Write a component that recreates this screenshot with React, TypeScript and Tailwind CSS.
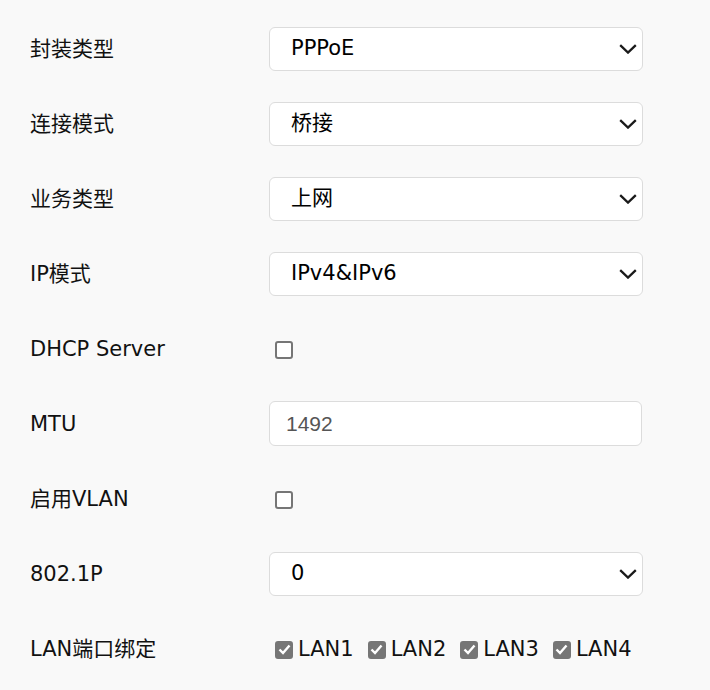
import React, { useState } from 'react';

const font = { fontFamily: '"DejaVu Sans", "Noto Sans CJK SC", sans-serif' };

const Chevron = () => (
  <svg width="18" height="10" viewBox="0 0 18 10" className="pointer-events-none absolute right-[6px] top-1/2 -translate-y-1/2">
    <path d="M1.2 1.2 L9 8.6 L16.8 1.2" fill="none" stroke="#1a1a1a" strokeWidth="2.3" />
  </svg>
);

const Select = ({ value, options }: { value: string; options: string[] }) => (
  <div className="relative w-[374px]">
    <select
      defaultValue={value}
      className="h-[44px] w-full appearance-none rounded-[6px] border border-[#dcdcdc] bg-white pl-[21px] pr-10 pt-[1px] text-[21px] text-black outline-none"
      style={font}
    >
      {options.map((o) => (
        <option key={o}>{o}</option>
      ))}
    </select>
    <Chevron />
  </div>
);

const Box = ({ checked, onClick }: { checked: boolean; onClick?: () => void }) => (
  <span
    onClick={onClick}
    className={`flex h-[18px] w-[18px] shrink-0 items-center justify-center rounded-[3px] border-2 border-[#767676] ${checked ? 'bg-[#767676]' : 'bg-white'}`}
  >
    {checked && (
      <svg width="13" height="11" viewBox="0 0 13 11">
        <path d="M1.5 5.5 L5 9 L11.5 1.5" fill="none" stroke="#fff" strokeWidth="2.4" />
      </svg>
    )}
  </span>
);

const Row = ({ label, children }: { label: string; children: React.ReactNode }) => (
  <div className="flex h-[75px] items-center">
    <div className="w-[239px] pt-[3px] text-[21px] text-[#111]">{label}</div>
    {children}
  </div>
);

export default function App() {
  const [dhcp, setDhcp] = useState(false);
  const [vlan, setVlan] = useState(false);
  const [lans, setLans] = useState([true, true, true, true]);

  return (
    <div className="min-h-[690px] w-[710px] bg-[#f9f9f9] pl-[30px] pt-[11px]" style={font}>
      <Row label="封装类型">
        <Select value="PPPoE" options={['PPPoE', 'IPoE', 'Bridge']} />
      </Row>
      <Row label="连接模式">
        <Select value="桥接" options={['桥接', '路由']} />
      </Row>
      <Row label="业务类型">
        <Select value="上网" options={['上网', 'TR069', 'VOIP', 'OTHER']} />
      </Row>
      <Row label="IP模式">
        <Select value="IPv4&IPv6" options={['IPv4', 'IPv6', 'IPv4&IPv6']} />
      </Row>
      <Row label="DHCP Server">
        <div className="pl-[6px] pt-[2px]">
          <Box checked={dhcp} onClick={() => setDhcp(!dhcp)} />
        </div>
      </Row>
      <Row label="MTU">
        <input
          defaultValue="1492"
          className="h-[45px] w-[373px] rounded-[6px] border border-[#dcdcdc] bg-white pl-[16px] text-[#555] outline-none"
          style={{ fontFamily: '"Liberation Sans", Arial, sans-serif', fontSize: '21px' }}
        />
      </Row>
      <Row label="启用VLAN">
        <div className="pl-[6px] pt-[2px]">
          <Box checked={vlan} onClick={() => setVlan(!vlan)} />
        </div>
      </Row>
      <Row label="802.1P">
        <Select value="0" options={['0', '1', '2', '3', '4', '5', '6', '7']} />
      </Row>
      <Row label="LAN端口绑定">
        <div className="flex items-center gap-[14px] pl-[6px] pt-[2px]">
          {lans.map((c, i) => (
            <label key={i} className="flex cursor-pointer items-center gap-[6px] text-[21px] text-[#111]">
              <Box checked={c} onClick={() => setLans(lans.map((v, j) => (j === i ? !v : v)))} />
              <span className="-ml-px">LAN{i + 1}</span>
            </label>
          ))}
        </div>
      </Row>
    </div>
  );
}
